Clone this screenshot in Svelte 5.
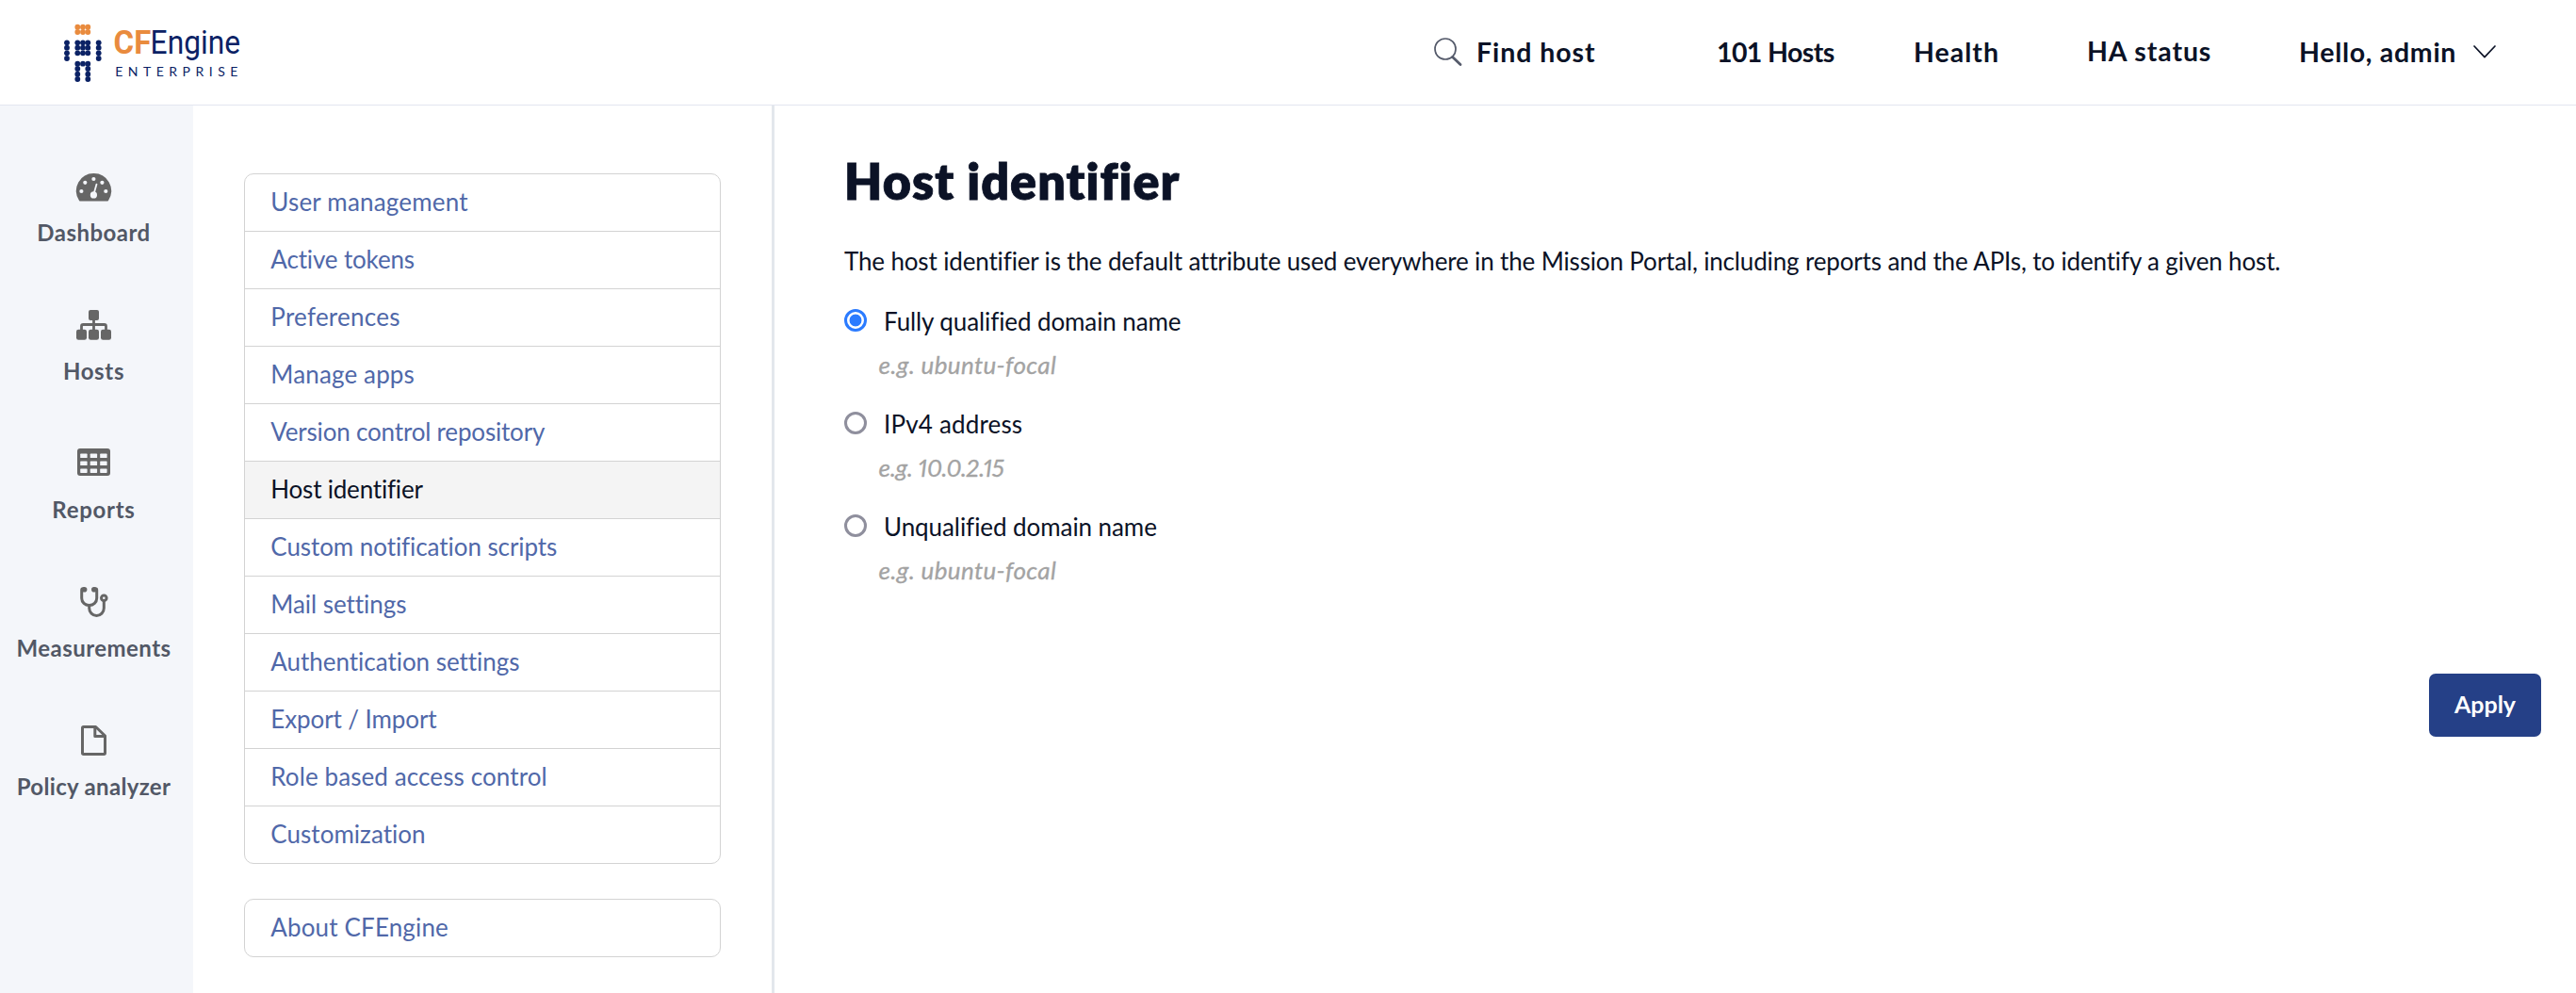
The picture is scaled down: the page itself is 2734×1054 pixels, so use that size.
<script>
  const sections = [
    { label: 'Dashboard', icon: 'dashboard', tracking: 0.48 },
    { label: 'Hosts', icon: 'hosts', tracking: 0.65 },
    { label: 'Reports', icon: 'reports', tracking: 0.71 },
    { label: 'Measurements', icon: 'measurements', tracking: 0.46 },
    { label: 'Policy analyzer', icon: 'policy', tracking: 0.32 }
  ];

  const settings = [
    { label: 'User management', tracking: 0.19 },
    { label: 'Active tokens', tracking: -0.15 },
    { label: 'Preferences', tracking: 0.25 },
    { label: 'Manage apps', tracking: 0.14 },
    { label: 'Version control repository', tracking: -0.18 },
    { label: 'Host identifier', tracking: -0.2 , active: true },
    { label: 'Custom notification scripts', tracking: -0.07 },
    { label: 'Mail settings', tracking: -0.05 },
    { label: 'Authentication settings', tracking: -0.03 },
    { label: 'Export / Import', tracking: -0.1 },
    { label: 'Role based access control', tracking: 0.1 },
    { label: 'Customization', tracking: 0.04 }
  ];

  const options = [
    { label: 'Fully qualified domain name', tracking: -0.1, example: 'e.g. ubuntu-focal', exampleTracking: 0.36 },
    { label: 'IPv4 address', tracking: 0.17, example: 'e.g. 10.0.2.15', exampleTracking: -0.25 },
    { label: 'Unqualified domain name', tracking: -0.07, example: 'e.g. ubuntu-focal', exampleTracking: 0.36 }
  ];

  let selected = $state(0);

  // Logo robot, as dot centres
  const head = [27.7, 33].flatMap((y) => [82.3, 88, 93.3].map((x) => [x, y]));
  const body = [
    ...[44.3, 49.7, 55.3, 61].flatMap((y) => [[71, y], [104.7, y]]),
    ...[44.3, 49.7, 55.3, 66.7].flatMap((y) => [82.3, 88, 93.3].map((x) => [x, y])),
    ...[72, 77.7, 83].flatMap((y) => [[82.3, y], [93.3, y]])
  ];
</script>

<div class="page">
  <header>
    <svg class="logo" viewBox="60 10 200 90" width="200" height="90">
      {#each head as [x, y]}<circle cx={x} cy={y} r="2.9" fill="#e98b3e" />{/each}
      {#each body as [x, y]}<circle cx={x} cy={y} r="2.9" fill="#0b2265" />{/each}
      <text class="brand cf" x="120.6" y="56" textLength="39.6" lengthAdjust="spacingAndGlyphs">CF</text>
      <text class="brand" x="159.6" y="56" textLength="95.5" lengthAdjust="spacingAndGlyphs">Engine</text>
      <text class="edition" x="122.2" y="80.3">ENTERPRISE</text>
    </svg>
    <nav class="top">
      <a class="find" href="#find">
        <svg width="30" height="30" viewBox="0 0 30 30" fill="none" stroke="#555b6b">
          <circle cx="12" cy="12" r="11" stroke-width="1.7" />
          <path d="M19.6 20.4 28 28.6" stroke-width="2.8" stroke-linecap="round" />
        </svg>
        <span>Find host</span>
      </a>
      <a class="count" href="#hosts">101 Hosts</a>
      <a class="health" href="#health">Health</a>
      <a class="ha" href="#ha">HA status</a>
      <a class="user" href="#user">
        <span>Hello, admin</span>
        <svg width="24" height="14" viewBox="0 0 24 14" fill="none" stroke="#0b1226" stroke-width="1.7">
          <path d="M1 1 12 12.6 23 1" stroke-linecap="round" stroke-linejoin="round" />
        </svg>
      </a>
    </nav>
  </header>

  <div class="columns">
    <aside class="sections">
      {#each sections as s}
        <a href="#{s.icon}">
          <span class="icon {s.icon}">
            {#if s.icon === 'dashboard'}
              <svg width="37" height="30" viewBox="0 0 37 30">
                <path fill="#666" d="M18.5 0A18.5 18.5 0 0 1 34.2 28.4Q33.6 29.6 32.4 29.6H4.6Q3.4 29.6 2.8 28.4A18.5 18.5 0 0 1 18.5 0Z" />
                <g fill="#f4f6fa">
                  <circle cx="5.4" cy="19" r="2.1" /><circle cx="9.3" cy="9.8" r="2.1" />
                  <circle cx="18.4" cy="6" r="2.1" /><circle cx="27.4" cy="9.8" r="2.1" />
                  <circle cx="31.3" cy="19" r="2.1" /><circle cx="18.4" cy="22.9" r="3.6" />
                </g>
                <path d="M18.8 21 21.5 11.6" stroke="#f4f6fa" stroke-width="1.8" stroke-linecap="round" />
              </svg>
            {:else if s.icon === 'hosts'}
              <svg width="37" height="32" viewBox="0 0 37 32">
                <g fill="#666">
                  <rect x="13" width="11" height="11" rx="2" />
                  <rect y="20.8" width="11" height="11" rx="2.3" />
                  <rect x="13" y="20.8" width="11" height="11" rx="2.3" />
                  <rect x="26" y="20.8" width="11" height="11" rx="2.3" />
                </g>
                <path fill="none" stroke="#666" stroke-width="2.8" d="M18.5 10V22M5.5 22V17.3Q5.5 15.5 7.3 15.5H29.7Q31.5 15.5 31.5 17.3V22" />
              </svg>
            {:else if s.icon === 'reports'}
              <svg width="35" height="29" viewBox="0 0 35 29">
                <rect width="35" height="29" rx="3" fill="#666" />
                {#each [5.6, 13.5, 21.4] as y}
                  {#each [3.2, 13.7, 24.2] as x}<rect {x} {y} width="7.4" height="4.5" rx=".6" fill="#f4f6fa" />{/each}
                {/each}
              </svg>
            {:else if s.icon === 'measurements'}
              <svg width="30" height="32" viewBox="0 0 30 32" fill="none" stroke="#666" stroke-width="3">
                <path d="M5 1.8H3.2Q1.7 1.8 1.7 3.3V12A8 7.6 0 0 0 17.7 12V3.3Q17.7 1.8 16.2 1.8H14.4" />
                <path d="M9.7 19.6V22.6A7.8 7.8 0 0 0 25.3 22.6V15" />
                <circle cx="25.3" cy="11.8" r="2.8" />
                <circle cx="4.6" cy="2.8" r="2.8" fill="#666" stroke="none" />
                <circle cx="14.8" cy="2.8" r="2.8" fill="#666" stroke="none" />
              </svg>
            {:else}
              <svg width="27" height="32" viewBox="0 0 27 32" fill="none" stroke="#666" stroke-width="3" stroke-linejoin="round">
                <path d="M2.6 1.5H15.6L25.5 11V29.3Q25.5 30.5 24.3 30.5H2.7Q1.5 30.5 1.5 29.3V2.7Q1.5 1.5 2.6 1.5Z" />
                <path d="M14.8 1.8V11.4H25.2" />
              </svg>
            {/if}
          </span>
          <span style:letter-spacing="{s.tracking}px">{s.label}</span>
        </a>
      {/each}
    </aside>

    <aside class="settings">
      <ul>
        {#each settings as s}
          <li class:active={s.active}><a href="#settings" style:letter-spacing="{s.tracking}px">{s.label}</a></li>
        {/each}
      </ul>
      <ul>
        <li><a class="about" href="#about">About CFEngine</a></li>
      </ul>
    </aside>

    <main>
      <h1>Host identifier</h1>
      <p class="intro">The host identifier is the default attribute used everywhere in the Mission Portal, including reports and the APIs, to identify a given host.</p>
      <div class="options">
        {#each options as o, i}
          <div class="option">
            <label>
              <input type="radio" name="identifier" value={i} bind:group={selected} />
              <span style:letter-spacing="{o.tracking}px">{o.label}</span>
            </label>
            <p class="example" style:letter-spacing="{o.exampleTracking}px">{o.example}</p>
          </div>
        {/each}
      </div>
      <button type="button">Apply</button>
    </main>
  </div>
</div>

<style>
  :global(body) {
    background: #fff;
  }
  .page {
    display: flex;
    flex-direction: column;
    height: 1054px;
    overflow: hidden;
    color: #0b1226;
    font: 400 26px/32px Lato, 'Liberation Sans', sans-serif;
    font-variant-ligatures: none;
  }
  a {
    color: inherit;
    text-decoration: none;
  }
  svg {
    display: block;
    flex: none;
    overflow: visible;
  }

  header {
    flex: none;
    display: flex;
    align-items: center;
    justify-content: space-between;
    height: 111px;
    padding: 0 85px 0 60px;
    border-bottom: 1px solid #e3e6f0;
  }
  .brand {
    font: 400 34.7px Roboto, sans-serif;
    fill: #0b2265;
  }
  .cf {
    font-weight: 700;
    fill: #e98b3e;
  }
  .edition {
    font: 400 14px Lato, sans-serif;
    letter-spacing: 5.5px;
    fill: #0b2265;
  }
  .top {
    display: grid;
    grid-template-columns: 300px 209px 184px 225px 209px;
    align-items: center;
    padding-bottom: 1px;
    font-size: 28.5px;
    font-weight: 700;
    white-space: nowrap;
  }
  .find,
  .user {
    display: flex;
    align-items: center;
  }
  .find {
    gap: 15px;
    letter-spacing: 0.95px;
  }
  .count {
    letter-spacing: -0.6px;
  }
  .health {
    letter-spacing: 1px;
  }
  .ha {
    padding-bottom: 2px;
    letter-spacing: 0.88px;
  }
  .user {
    justify-content: space-between;
    letter-spacing: 0.7px;
  }

  .columns {
    flex: 1;
    display: grid;
    grid-template-columns: 205px 614px 1fr;
    min-height: 0;
  }

  .sections {
    display: flex;
    flex-direction: column;
    gap: 65px;
    padding: 68px 6px 0 0;
    background: #f4f6fa;
    color: #525866;
    font-size: 24px;
    font-weight: 700;
    line-height: 30px;
    white-space: nowrap;
  }
  .sections a {
    display: flex;
    flex-direction: column;
    align-items: center;
    gap: 16px;
  }
  .icon {
    display: flex;
    align-items: center;
    height: 36px;
  }
  .icon.dashboard,
  .icon.reports {
    align-items: flex-start;
    box-sizing: border-box;
    padding-top: 2px;
  }
  .icon.dashboard {
    padding-top: 4px;
  }

  .settings {
    display: flex;
    flex-direction: column;
    gap: 37px;
    padding: 72px 54px 0;
  }
  ul {
    margin: 0;
    padding: 0;
    list-style: none;
    border: 1px solid #d3d3d3;
    border-radius: 10px;
    overflow: hidden;
  }
  li + li {
    border-top: 1px solid #d3d3d3;
  }
  li a {
    display: block;
    padding: 13px 26px 15px 27.3px;
    color: #5068a9;
  }
  li.active {
    background: #f4f4f4;
  }
  li.active a {
    color: #0b1226;
  }
  .about {
    letter-spacing: 0.15px;
  }

  main {
    display: flex;
    flex-direction: column;
    padding: 50px 37px 0 74px;
    border-left: 3px solid #e3e7ec;
  }
  h1 {
    margin: 0 0 39px;
    font-size: 52px;
    font-weight: 800;
    line-height: 60px;
    letter-spacing: 1.05px;
    -webkit-text-stroke: 0.8px #0b1226;
  }
  p {
    margin: 0;
  }
  .intro {
    letter-spacing: -0.15px;
  }
  .options {
    display: flex;
    flex-direction: column;
    gap: 31px;
    margin-top: 32px;
  }
  .option {
    display: flex;
    flex-direction: column;
    gap: 14px;
  }
  label {
    display: flex;
    gap: 18px;
  }
  input {
    appearance: none;
    flex: none;
    box-sizing: border-box;
    width: 24px;
    height: 24px;
    margin: 3px 0 0;
    border: 3px solid #8f8f9d;
    border-radius: 50%;
  }
  input:checked {
    border-color: #2b7bff;
    background: radial-gradient(circle, #2b7bff 6px, #fff 6.8px);
  }
  .example {
    padding-left: 36.5px;
    color: #a3a3a3;
    font-style: italic;
    font-variant-numeric: proportional-nums;
    -webkit-text-stroke: 0.3px #a3a3a3;
  }
  button {
    align-self: flex-end;
    width: 119px;
    height: 67px;
    margin-top: 94px;
    padding: 0 0 4px;
    border: 0;
    border-radius: 7px;
    background: #254087;
    color: #fff;
    font: 700 25px/32px Lato, 'Liberation Sans', sans-serif;
  }
</style>
